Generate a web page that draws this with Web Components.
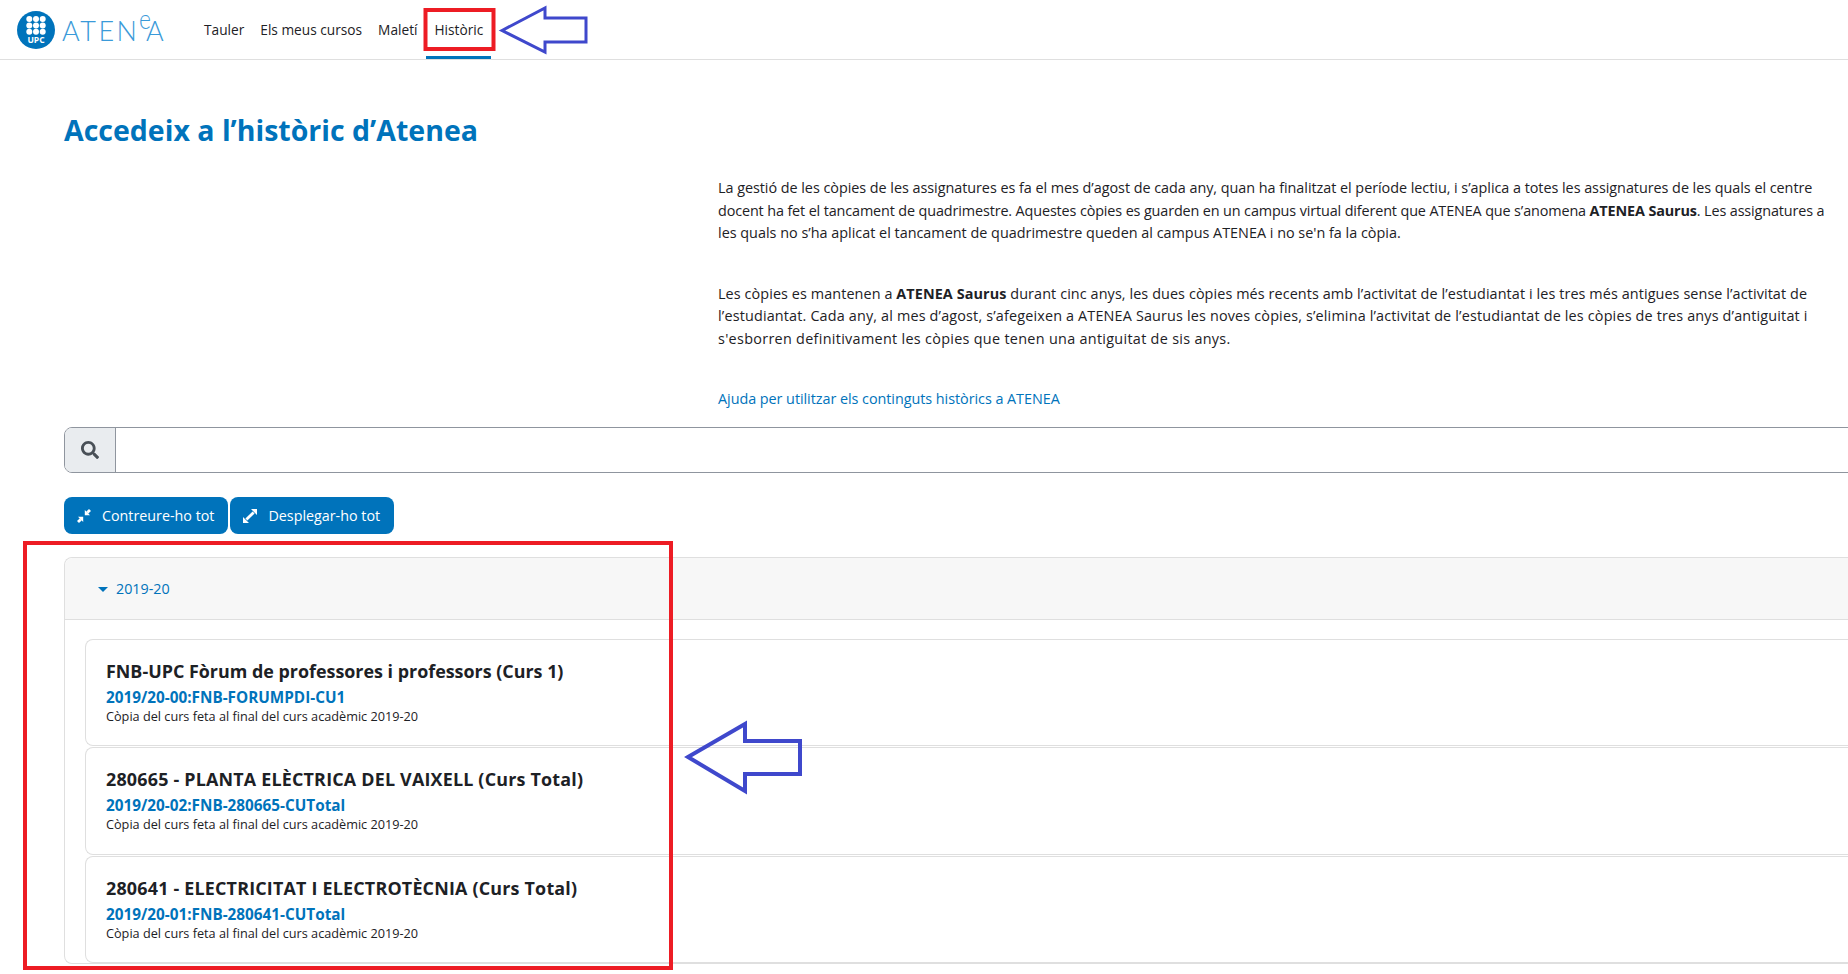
<!DOCTYPE html>
<html lang="ca">
<head>
<meta charset="utf-8">
<title>Accedeix a l'històric d'Atenea</title>
<style>
    html, body { margin: 0; height: 100%; overflow: hidden; background: #fff; }
    body { font-family: "Open Sans", "Liberation Sans", sans-serif; font-size: 14px; color: #1d2125; position: relative; }
</style>
</head>
<body>
<template id="atenea-navbar-tpl">
    <style>
        :host { display: flex; align-items: stretch; height: 59px; border-bottom: 1px solid #dfdfdf; background: #fff; }
        .brand { display: flex; align-items: flex-start; padding: 11px 0 0 17px; width: 196px; box-sizing: border-box; }
        .mark { position: relative; width: 38px; height: 38px; flex: none; }
        .mark svg { display: block; }
        .upc { position: absolute; left: 0; right: 0; bottom: 5px; text-align: center; color: #fff; font: 700 8.5px "Open Sans", sans-serif; line-height: 9px; }
        .word { margin: 6px 0 0 7px; font: 300 27px/27px Lato, "Open Sans", sans-serif; color: #3a9ad9; display: flex; align-items: baseline; letter-spacing: 2.5px; white-space: nowrap; }
        .word span { display: inline-block; transform: scaleX(.85); transform-origin: left; font-size: 27px; line-height: 0; position: relative; top: -12px; margin: 0 -6.5px 0 -1px; letter-spacing: 0; }
        nav { display: flex; align-items: stretch; }
    </style>
    <div class="brand">
        <div class="mark">
            <svg width="38" height="38" viewBox="0 0 38 38">
                <circle cx="19" cy="19" r="19" fill="#0073bb"/>
                <g fill="#fff">
                    <circle cx="12.3" cy="8" r="3"/><circle cx="19" cy="8" r="3"/><circle cx="25.7" cy="8" r="3"/>
                    <circle cx="12.3" cy="14.4" r="3"/><circle cx="19" cy="14.4" r="3"/><circle cx="25.7" cy="14.4" r="3"/>
                    <circle cx="12.3" cy="20.8" r="3"/><circle cx="19" cy="20.8" r="3"/><circle cx="25.7" cy="20.8" r="3"/>
                </g>
            </svg>
            <div class="upc">UPC</div>
        </div>
        <div class="word">ATEN<span>e</span>A</div>
    </div>
    <nav><slot></slot></nav>
</template>

<template id="nav-item-tpl">
    <style>
        :host { display: flex; align-items: center; padding: 0 8px; color: #1d2125; font-size: 13.7px; border-bottom: 3px solid transparent; height: 59px; box-sizing: border-box; padding-top: 3px; white-space: nowrap; }
        :host([active]) { border-bottom-color: #0073bb; margin-left: 1px; }
    </style>
    <slot></slot>
</template>

<template id="search-box-tpl">
    <style>
        :host { display: flex; height: 46px; box-sizing: border-box; border: 1px solid #8f959e; border-radius: 8px; overflow: hidden; background: #fff; }
        .icon { width: 50px; display: flex; align-items: center; justify-content: center; background: #e9ecef; border-right: 1px solid #8f959e; }
        input { flex: 1; border: 0; outline: 0; background: #fff; }
    </style>
    <div class="icon">
        <svg width="18" height="18" viewBox="0 0 512 512"><path fill="#495057" d="M505 442.700 405.300 343c-4.500-4.500-10.600-7-17-7H372c27.600-35.300 44-79.700 44-128C416 93.100 322.900 0 208 0S0 93.100 0 208s93.100 208 208 208c48.300 0 92.700-16.400 128-44v16.300c0 6.400 2.500 12.500 7 17l99.700 99.700c9.400 9.400 24.600 9.400 33.900 0l28.300-28.300c9.400-9.400 9.400-24.600.1-34zM208 336c-70.700 0-128-57.200-128-128 0-70.700 57.200-128 128-128 70.700 0 128 57.200 128 128 0 70.700-57.200 128-128 128z"/></svg>
    </div>
    <input type="text" aria-label="Cerca">
</template>

<template id="action-button-tpl">
    <style>
        :host { display: inline-flex; align-items: center; height: 37px; box-sizing: border-box; padding: 0 14px 0 13px; gap: 11px; border-radius: 8px; background: #0073bb; color: #fff; font-size: 14.3px; white-space: nowrap; }
        svg { display: block; }
    </style>
    <svg width="14" height="14" viewBox="0 0 14 14" fill="#fff">
        <path id="p"/>
    </svg>
    <slot></slot>
</template>

<template id="year-section-tpl">
    <style>
        :host { display: block; border: 1px solid #dfdfdf; border-right: 0; border-radius: 8px 0 0 8px; background: #fff; }
        .head { display: flex; align-items: center; gap: 8px; height: 61px; padding-left: 33px; background: #f7f7f7; border-bottom: 1px solid #dfdfdf; color: #0073bb; border-radius: 8px 0 0 0; font-size: 14.3px; }
        .caret { width: 0; height: 0; border-left: 5px solid transparent; border-right: 5px solid transparent; border-top: 5px solid #0073bb; margin-top: 1px; }
        .body { padding: 19px 0 0 20px; display: flex; flex-direction: column; gap: 1px; }
    </style>
    <div class="head"><span class="caret"></span><span id="label"></span></div>
    <div class="body"><slot></slot></div>
</template>

<template id="course-card-tpl">
    <style>
        :host { display: block; height: 107.3px; box-sizing: border-box; border: 1px solid #dfdfdf; border-right: 0; border-radius: 8px 0 0 8px; padding: 17px 20px 0; background: #fff; }
        .title { font-size: 17.9px; font-weight: 700; line-height: 29px; color: #1d2125; white-space: nowrap; }
        .code { font-size: 15.3px; font-weight: 700; line-height: 21px; margin-top: 1px; color: #0073bb; }
        .note { font-size: 12.7px; line-height: 17px; color: #1d2125; }
    </style>
    <div class="title"><slot name="title"></slot></div>
    <div class="code"><slot name="code"></slot></div>
    <div class="note"><slot name="note"></slot></div>
</template>

<template id="history-page-tpl">
    <style>
        :host { display: block; padding: 0 0 0 64px; width: 2100px; box-sizing: border-box; }
        h1 { margin: 0; padding-top: 52px; font-size: 28.5px; line-height: 36px; font-weight: 700; color: #0073bb; }
        .intro { display: grid; grid-template-columns: 654px 1fr; margin-top: 29px; }
        .tools { display: flex; gap: 2px; margin: 24px 0 23px; }
    </style>
    <h1><slot name="heading"></slot></h1>
    <div class="intro"><div></div><div><slot name="intro"></slot></div></div>
    <slot name="search"></slot>
    <div class="tools"><slot name="tools"></slot></div>
    <slot name="section"></slot>
</template>

<template id="intro-text-tpl">
    <style>
        :host { display: block; font-size: 14.4px; line-height: 22.5px; white-space: nowrap; height: 250px; color: #1d2125; }
        ::slotted(p) { margin: 0 0 38px; }
        ::slotted(a) { color: #0073bb; letter-spacing: -.05px; }
    </style>
    <slot></slot>
</template>

<template id="note-overlay-tpl">
    <style>
        :host { position: absolute; left: 0; top: 0; width: 1848px; height: 974px; pointer-events: none; display: block; }
        svg { display: block; }
    </style>
    <svg width="1848" height="974" viewBox="0 0 1848 974" fill="none">
        <rect x="425.5" y="10" width="68" height="39" stroke="#ed1c24" stroke-width="4"/>
        <rect x="25" y="543" width="646" height="425" stroke="#ed1c24" stroke-width="4"/>
        <path d="M502 30.5 L545 8 V18 H586 V42 H545 V52 Z" stroke="#3f48cc" stroke-width="3"/>
        <path d="M688 757 L745 724 V741 H800 V774 H745 V791 Z" stroke="#3f48cc" stroke-width="4"/>
    </svg>
</template>

<atenea-navbar>
    <nav-item>Tauler</nav-item>
    <nav-item>Els meus cursos</nav-item>
    <nav-item>Maletí</nav-item>
    <nav-item active>Històric</nav-item>
</atenea-navbar>

<history-page>
    <span slot="heading">Accedeix a l’històric d’Atenea</span>
    <intro-text slot="intro">
        <p><span style="letter-spacing:-.04px">La gestió de les còpies de les assignatures es fa el mes d’agost de cada any, quan ha finalitzat el període lectiu, i s’aplica a totes les assignatures de les quals el centre</span><br><span style="letter-spacing:-.13px">docent ha fet el tancament de quadrimestre. Aquestes còpies es guarden en un campus virtual diferent que ATENEA que s’anomena <b>ATENEA Saurus</b>. Les assignatures a</span><br>les quals no s’ha aplicat el tancament de quadrimestre queden al campus ATENEA i no se'n fa la còpia.</p>
        <p><span style="letter-spacing:.09px">Les còpies es mantenen a <b>ATENEA Saurus</b> durant cinc anys, les dues còpies més recents amb l’activitat de l’estudiantat i les tres més antigues sense l’activitat de</span><br><span style="letter-spacing:.16px">l’estudiantat. Cada any, al mes d’agost, s’afegeixen a ATENEA Saurus les noves còpies, s’elimina l’activitat de l’estudiantat de les còpies de tres anys d’antiguitat i</span><br><span style="letter-spacing:.3px">s'esborren definitivament les còpies que tenen una antiguitat de sis anys.</span></p>
        <a>Ajuda per utilitzar els continguts històrics a ATENEA</a>
    </intro-text>
    <search-box slot="search"></search-box>
    <action-button slot="tools" icon="compress">Contreure-ho tot</action-button>
    <action-button slot="tools" icon="expand">Desplegar-ho tot</action-button>
    <year-section slot="section" label="2019-20">
        <course-card>
            <span slot="title">FNB-UPC Fòrum de professores i professors (Curs 1)</span>
            <span slot="code">2019/20-00:FNB-FORUMPDI-CU1</span>
            <span slot="note">Còpia del curs feta al final del curs acadèmic 2019-20</span>
        </course-card>
        <course-card>
            <span slot="title" style="letter-spacing:.2px">280665 - PLANTA ELÈCTRICA DEL VAIXELL (Curs Total)</span>
            <span slot="code">2019/20-02:FNB-280665-CUTotal</span>
            <span slot="note">Còpia del curs feta al final del curs acadèmic 2019-20</span>
        </course-card>
        <course-card>
            <span slot="title" style="letter-spacing:.2px">280641 - ELECTRICITAT I ELECTROTÈCNIA (Curs Total)</span>
            <span slot="code">2019/20-01:FNB-280641-CUTotal</span>
            <span slot="note">Còpia del curs feta al final del curs acadèmic 2019-20</span>
        </course-card>
    </year-section>
</history-page>

<note-overlay></note-overlay>

<script>
    // plain elements: same boilerplate for all of them, just clone the template
    function simple(name, tplId) {
        customElements.define(name, class extends HTMLElement {
            constructor() {
                super();
                this.attachShadow({ mode: 'open' });
                this.shadowRoot.appendChild(document.getElementById(tplId).content.cloneNode(true));
            }
        });
    }

    simple('atenea-navbar', 'atenea-navbar-tpl');
    simple('nav-item', 'nav-item-tpl');
    simple('search-box', 'search-box-tpl');
    simple('course-card', 'course-card-tpl');
    simple('history-page', 'history-page-tpl');
    simple('intro-text', 'intro-text-tpl');
    simple('note-overlay', 'note-overlay-tpl');

    const ICONS = {
        compress: 'M7.8 1 V6.2 H13 Z M9.4 2.6 L12 0 L14 2 L11.4 4.6 Z M6.2 13 V7.8 H1 Z M4.6 11.4 L2 14 L0 12 L2.6 9.4 Z',
        expand: 'M14 0 V6 L8 0 Z M0 14 V8 L6 14 Z M9.6 2.4 L11.6 4.4 L4.4 11.6 L2.4 9.6 Z'
    };

    class ActionButton extends HTMLElement {
        constructor() {
            super();
            this.attachShadow({ mode: 'open' });
            this.shadowRoot.appendChild(document.getElementById('action-button-tpl').content.cloneNode(true));
        }

        connectedCallback() {
            this.shadowRoot.getElementById('p').setAttribute('d', ICONS[this.getAttribute('icon')]);
        }
    }
    customElements.define('action-button', ActionButton);

    class YearSection extends HTMLElement {
        constructor() {
            super();
            this.attachShadow({ mode: 'open' });
            this.shadowRoot.appendChild(document.getElementById('year-section-tpl').content.cloneNode(true));
        }

        connectedCallback() {
            this.shadowRoot.getElementById('label').textContent = this.getAttribute('label');
        }
    }
    customElements.define('year-section', YearSection);
</script>
</body>
</html>
